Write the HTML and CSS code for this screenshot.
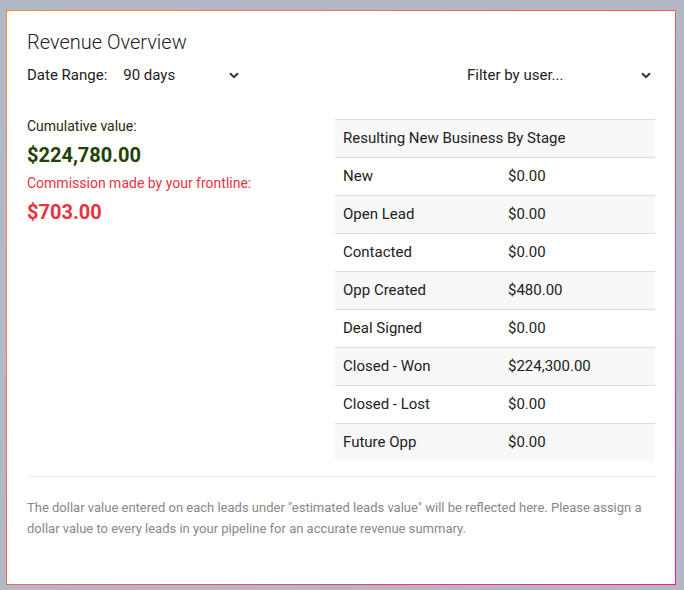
FILE: index.html
```html
<!DOCTYPE html>
<html lang="en">
<head>
  <meta charset="UTF-8">
  <title>Revenue Overview</title>
  <link rel="stylesheet" href="styles.css">
</head>
<body>
  <div class="card">
    <h2 class="card-title">Revenue Overview</h2>

    <div class="filters">
      <div class="range">
        <span class="range-label">Date Range:</span>
        <div class="select select-range">
          <span>90 days</span>
          <svg class="chev" width="10" height="7" viewBox="0 0 10 7"><polyline points="1,1.2 5,5.2 9,1.2" fill="none" stroke="#333" stroke-width="2"/></svg>
        </div>
      </div>
      <div class="select select-user">
        <span>Filter by user...</span>
        <svg class="chev" width="10" height="7" viewBox="0 0 10 7"><polyline points="1,1.2 5,5.2 9,1.2" fill="none" stroke="#333" stroke-width="2"/></svg>
      </div>
    </div>

    <div class="summary">
      <div class="totals">
        <p class="label">Cumulative value:</p>
        <p class="value value-green">$224,780.00</p>
        <p class="label label-red">Commission made by your frontline:</p>
        <p class="value value-red">$703.00</p>
      </div>

      <table class="stages">
        <colgroup>
          <col class="col-name">
          <col>
        </colgroup>
        <tr><th colspan="2">Resulting New Business By Stage</th></tr>
        <tr><td>New</td><td>$0.00</td></tr>
        <tr><td>Open Lead</td><td>$0.00</td></tr>
        <tr><td>Contacted</td><td>$0.00</td></tr>
        <tr><td>Opp Created</td><td>$480.00</td></tr>
        <tr><td>Deal Signed</td><td>$0.00</td></tr>
        <tr><td>Closed - Won</td><td>$224,300.00</td></tr>
        <tr><td>Closed - Lost</td><td>$0.00</td></tr>
        <tr><td>Future Opp</td><td>$0.00</td></tr>
      </table>
    </div>

    <hr class="divider">

    <p class="note">The dollar value entered on each leads under "estimated leads value" will be reflected here. Please assign a dollar value to every leads in your pipeline for an accurate revenue summary.</p>
  </div>
</body>
</html>
```

FILE: styles.css
```css
body {
  margin: 0;
  padding: 10px 8px 6px 6px;
  background-color: #b2b9c6;
  font-family: Roboto, "Liberation Sans", sans-serif;
  color: #333;
}
.card {
  box-sizing: border-box;
  width: 670px;
  height: 575px;
  padding: 17px 20px 0 20px;
  background-color: #fff;
  border: 1.5px solid;
  border-image: linear-gradient(135deg, #ff8a2a, #ff5a5c 50%, #ff1580) 1;
}
.card-title {
  margin: 0;
  font-size: 20px;
  font-weight: 300;
  line-height: 28px;
  color: #222;
}
.filters {
  display: flex;
  justify-content: space-between;
  align-items: center;
  height: 28px;
  margin-top: 5px;
  font-size: 15px;
}
.range {
  display: flex;
  align-items: center;
}
.range-label {
  color: #222;
}
.select {
  display: flex;
  justify-content: space-between;
  align-items: center;
  box-sizing: border-box;
  padding: 0 4px 0 12px;
  color: #222;
}
.select-range {
  width: 132px;
  margin-left: 4px;
}
.select-user {
  width: 200px;
}
.summary {
  display: flex;
  gap: 20px;
  margin-top: 27px;
}
.totals {
  flex: 1;
}
.totals p {
  margin: 0;
}
.label {
  font-size: 14px;
  line-height: 20px;
  color: #1f2d0a;
}
.label-red {
  margin-top: 4px !important;
  color: #e8333f;
}
.value {
  margin-top: 5px !important;
  font-size: 20px;
  font-weight: 700;
  line-height: 28px;
}
.value-green {
  color: #234200;
}
.value-red {
  color: #e8333f;
}
.stages {
  width: 320px;
  margin-top: 3px;
  border-collapse: collapse;
  table-layout: fixed;
  font-size: 15px;
  color: #222;
}
.col-name {
  width: 165px;
}
.stages th,
.stages td {
  padding: 8px;
  line-height: 21px;
  text-align: left;
  font-weight: 400;
  border-top: 1px solid #dcdcdc;
}
.stages tr:nth-child(odd) {
  background-color: #f8f8f8;
}
.divider {
  margin: 15px 0 0 0;
  border: 0;
  border-top: 1px solid #ebebeb;
}
.note {
  margin: 20px 0 0 0;
  font-size: 13px;
  line-height: 21px;
  color: #888;
}
```
